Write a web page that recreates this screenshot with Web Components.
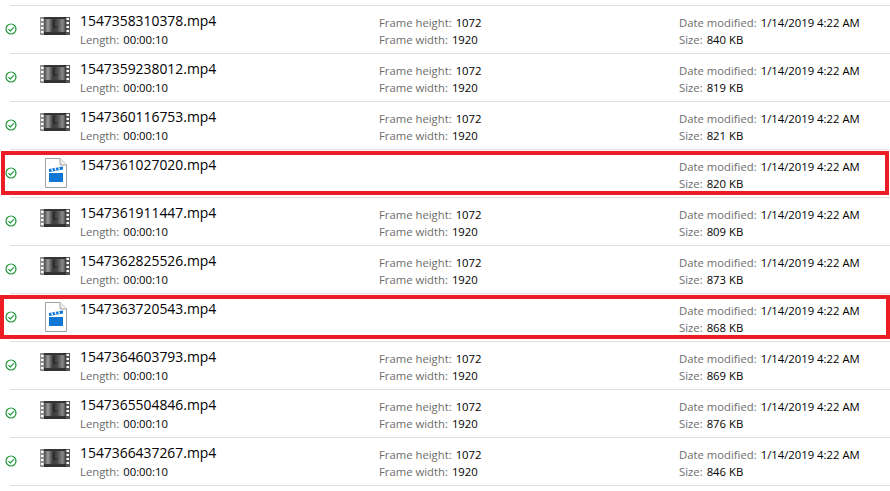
<!DOCTYPE html>
<html>
<head>
<meta charset="utf-8">
<style>
html,body{margin:0;padding:0;background:#fff;overflow:hidden}
</style>
</head>
<body>
<file-list></file-list>

<template id="row-tpl">
<style>
:host{
    display:grid;
    grid-template-columns:35px 40px 299px 300px 1fr;
    height:48px;
    box-sizing:border-box;
    padding-left:5px;
    position:relative;
    font-family:"Open Sans","Noto Sans",sans-serif;
    font-size:11.3px;
    color:#000;
    background:linear-gradient(#dfdfdf,#dfdfdf) no-repeat 10px 100%/100% 1px;
}
:host([flagged])::after{
    content:"";
    position:absolute;
    left:1px;right:1px;top:1px;bottom:3px;
    border:4px solid #ed1c24;
    box-sizing:border-box;
    pointer-events:none;
}
:host([wide])::after{left:0;right:0}
.check{align-self:center;display:flex;margin-top:-3px}
.icon{align-self:start;display:flex;margin-top:11px}
.cell{display:flex;flex-direction:column;padding-top:5px;white-space:nowrap}
.cell.meta{padding-top:8px}
.name{font-size:13.9px;line-height:20px;height:20px}
.line{line-height:17px;height:17px}
.k{color:#6d6d6d;margin-right:4px}
</style>
<div class="check">
    <svg width="12" height="12" viewBox="0 0 12 12">
        <circle cx="6" cy="6" r="5" fill="none" stroke="#1d9a3c" stroke-width="1.2"></circle>
        <path d="M3.4 6.1 5.3 8 8.8 4.3" fill="none" stroke="#1d9a3c" stroke-width="1.2"></path>
    </svg>
</div>
<div class="icon" id="icon"></div>
<div class="cell" id="c1"></div>
<div class="cell meta" id="c2"></div>
<div class="cell meta" id="c3"></div>
</template>

<template id="film-tpl">
<svg width="30" height="18" viewBox="0 0 30 18" style="display:block">
    <defs>
        <linearGradient id="g" x1="0" x2="1" y1="0" y2="0">
            <stop offset="0" stop-color="#4a4a4a"></stop>
            <stop offset=".18" stop-color="#9a9a9a"></stop>
            <stop offset=".4" stop-color="#3a3a3a"></stop>
            <stop offset=".6" stop-color="#4a4a4a"></stop>
            <stop offset=".85" stop-color="#8a8a8a"></stop>
            <stop offset="1" stop-color="#3a3a3a"></stop>
        </linearGradient>
    </defs>
    <rect width="30" height="18" fill="#333"></rect>
    <rect x="0" width="4" height="18" fill="#929292"></rect>
    <rect x="26" width="4" height="18" fill="#555"></rect>
    <g fill="#fff">
        <rect x="1" y="2" width="2.500" height="2"></rect><rect x="1" y="6" width="2.500" height="2"></rect>
        <rect x="1" y="10" width="2.500" height="2"></rect><rect x="1" y="14" width="2.500" height="2"></rect>
        <rect x="26.500" y="1" width="2.500" height="2"></rect><rect x="26.500" y="5" width="2.500" height="2"></rect>
        <rect x="26.500" y="9" width="2.500" height="2"></rect><rect x="26.500" y="13" width="2.500" height="2"></rect>
    </g>
    <rect x="4" y="2" width="22" height="13" fill="url(#g)"></rect>
    <path d="M14 3v7h3" fill="none" stroke="#1c1c1c" stroke-width="1"></path>
</svg>
</template>

<template id="doc-tpl">
<svg width="22" height="30" viewBox="0 0 22 30" style="display:block;margin:-3px 0 0 5px">
    <path d="M.5.5H15L21.500 7V29.500H.5Z" fill="#fff" stroke="#a0a0a0"></path>
    <path d="M15 .5V7H21.500" fill="#efefef" stroke="#a0a0a0"></path>
    <rect x="4" y="15" width="14" height="9" fill="#0f78d7"></rect>
    <path d="M4 11 18 8.500V11.500L4 14Z" fill="#0f78d7"></path>
    <path d="M6.500 10.500 7.500 13M10 10 11 12.500M13.500 9.300 14.500 11.800" stroke="#fff" stroke-width="1.100"></path>
</svg>
</template>

<script>
class FileRow extends HTMLElement {
    constructor() {
        super()
        this.attachShadow({mode:"open"})
        this.shadowRoot.appendChild(document.getElementById('row-tpl').content.cloneNode(true))
    }
    line(k,v){
        const d=document.createElement('div')
        d.className='line'
        const s=document.createElement('span')
        s.className='k'
        s.textContent=k+':'
        d.append(s,v)
        return d
    }
    connectedCallback(){
        const root=this.shadowRoot
        const video=this.hasAttribute('length')
        const tpl=video?'film-tpl':'doc-tpl'
        root.querySelector('#icon').appendChild(document.getElementById(tpl).content.cloneNode(true))
        const name=document.createElement('div')
        name.className='name'
        name.textContent=this.getAttribute('name')
        root.querySelector('#c1').append(name)
        if(video){
            root.querySelector('#c1').append(this.line('Length',this.getAttribute('length')))
            root.querySelector('#c2').append(this.line('Frame height','1072'),this.line('Frame width','1920'))
        }
        root.querySelector('#c3').append(this.line('Date modified','1/14/2019 4:22 AM'),this.line('Size',this.getAttribute('size')))
    }
}
customElements.define('file-row',FileRow)

class FileList extends HTMLElement {
    constructor() {
        super()
        this.attachShadow({mode:"open"})
        this.shadowRoot.innerHTML=`<style>:host{display:block;padding-top:6px;background:linear-gradient(#dfdfdf,#dfdfdf) no-repeat 10px 5px/100% 1px}</style><slot></slot>`
    }
    connectedCallback(){
        const files=[
            ['1547358310378.mp4','840 KB',1],['1547359238012.mp4','819 KB',1],['1547360116753.mp4','821 KB',1],
            ['1547361027020.mp4','820 KB',0],['1547361911447.mp4','809 KB',1],['1547362825526.mp4','873 KB',1],
            ['1547363720543.mp4','868 KB',0],['1547364603793.mp4','869 KB',1],['1547365504846.mp4','876 KB',1],
            ['1547366437267.mp4','846 KB',1]
        ]
        files.forEach((f,i)=>{
            const r=document.createElement('file-row')
            r.setAttribute('name',f[0])
            r.setAttribute('size',f[1])
            if(f[2]) r.setAttribute('length','00:00:10')
            else r.setAttribute('flagged','')
            if(i==6) r.setAttribute('wide','')
            this.appendChild(r)
        })
    }
}
customElements.define('file-list',FileList)
</script>
</body>
</html>
